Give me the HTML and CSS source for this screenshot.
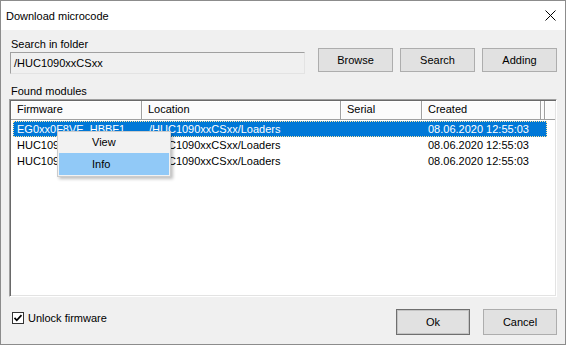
FILE: index.html
```html
<!DOCTYPE html>
<html lang="en">
<head>
    <meta charset="UTF-8">
    <title>Download microcode</title>
    <link rel="stylesheet" href="styles.css">
</head>
<body>
    <div class="window">
        <div class="titlebar">
            <span class="title">Download microcode</span>
            <svg class="close" width="11" height="11" viewBox="0 0 11 11">
                <path d="M0.5 0.5 L10.5 10.5 M10.5 0.5 L0.5 10.5" stroke="#000" stroke-width="1" fill="none"/>
            </svg>
        </div>

        <div class="content">
            <div class="folder-row">
                <div class="folder-field">
                    <div class="label">Search in folder</div>
                    <div class="path">/HUC1090xxCSxx</div>
                </div>
                <div class="actions">
                    <button class="btn">Browse</button>
                    <button class="btn">Search</button>
                    <button class="btn">Adding</button>
                </div>
            </div>

            <div class="label found">Found modules</div>

            <div class="listbox">
                <div class="header">
                    <div class="hcol c-fw">Firmware</div>
                    <div class="hcol c-loc">Location</div>
                    <div class="hcol c-serial">Serial</div>
                    <div class="hcol c-created">Created</div>
                    <div class="hcol c-tail"></div>
                    <div class="hcol c-rest"></div>
                </div>
                <div class="rows">
                    <div class="row selected">
                        <div class="cell c-fw">EG0xx0F8VE_HBBF1</div>
                        <div class="cell c-loc">/HUC1090xxCSxx/Loaders</div>
                        <div class="cell c-serial"></div>
                        <div class="cell c-created">08.06.2020 12:55:03</div>
                    </div>
                    <div class="row">
                        <div class="cell c-fw">HUC1090xxCSxx</div>
                        <div class="cell c-loc">/HUC1090xxCSxx/Loaders</div>
                        <div class="cell c-serial"></div>
                        <div class="cell c-created">08.06.2020 12:55:03</div>
                    </div>
                    <div class="row">
                        <div class="cell c-fw">HUC1090xxCSxx_2</div>
                        <div class="cell c-loc">/HUC1090xxCSxx/Loaders</div>
                        <div class="cell c-serial"></div>
                        <div class="cell c-created">08.06.2020 12:55:03</div>
                    </div>
                </div>
            </div>

            <div class="footer">
                <label class="check">
                    <svg class="box" width="12" height="12" viewBox="0 0 12 12">
                        <rect x="0.5" y="0.5" width="11" height="11" fill="#fff" stroke="#333"/>
                        <path d="M2.5 5.8 L4.8 8.3 L9.5 3.2" stroke="#000" stroke-width="1.7" fill="none"/>
                    </svg>
                    <span>Unlock firmware</span>
                </label>
                <div class="dialog-buttons">
                    <button class="btn default">Ok</button>
                    <button class="btn">Cancel</button>
                </div>
            </div>
        </div>

        <div class="menu">
            <div class="menu-item">View</div>
            <div class="menu-item hover">Info</div>
        </div>
    </div>
</body>
</html>
```

FILE: styles.css
```css
* {
    box-sizing: border-box;
}

body {
    margin: 0;
    background: #fff;
    font-family: "Liberation Sans", Arial, sans-serif;
    font-size: 11px;
    color: #000;
}

.window {
    position: relative;
    width: 566px;
    height: 345px;
    border: 1px solid #8c8c8c;
    background: #f0f0f0;
    display: flex;
    flex-direction: column;
}

.titlebar {
    height: 29px;
    background: #fff;
    display: flex;
    align-items: center;
    justify-content: space-between;
    padding: 0 9px 0 5px;
}

.close {
    display: block;
}

.content {
    flex: 1;
    display: flex;
    flex-direction: column;
    padding: 7px 8px 8px 8px;
}

.label {
    line-height: 14px;
    padding-left: 2px;
}

.folder-row {
    display: flex;
    align-items: flex-start;
}

.folder-field {
    width: 296px;
}

.path {
    margin: 1px 0 0 1px;
    height: 22px;
    line-height: 20px;
    padding-left: 3px;
    border: 1px solid;
    border-color: #a0a0a0 #e3e3e3 #e3e3e3 #a0a0a0;
    background: #f0f0f0;
}

.actions {
    margin-left: auto;
    margin-top: 11px;
    display: flex;
    gap: 7px;
}

.btn {
    width: 75px;
    height: 24px;
    padding: 0;
    background: #e1e1e1;
    border: 1px solid #adadad;
    font: inherit;
    color: #000;
}

.found {
    margin-top: 10px;
}

/* list view */
.listbox {
    margin-top: 1px;
    height: 198px;
    padding: 1px;
    background: #fff;
    border: 1px solid;
    border-color: #a0a0a0 #fff #fff #a0a0a0;
    box-shadow: inset 1px 1px 0 #696969, inset -1px -1px 0 #e3e3e3;
    overflow: hidden;
}

.header {
    display: flex;
    height: 19px;
}

.hcol {
    height: 19px;
    line-height: 17px;
    padding-left: 6px;
    background: #fbfbfb;
    border-right: 1px solid #a0a0a0;
    border-bottom: 1px solid #a0a0a0;
    box-shadow: inset 1px 1px 0 #fff;
    white-space: nowrap;
}

.hcol.c-fw { width: 131px; }
.hcol.c-loc { width: 199px; }
.hcol.c-serial { width: 81px; }
.hcol.c-created { width: 119px; }
.hcol.c-tail { width: 4px; padding: 0; }
.hcol.c-rest { flex: 1; border-right: none; }

.rows {
    margin-top: 1px;
}

.row {
    display: flex;
    width: 534px;
    margin-left: 2px;
    height: 16px;
    line-height: 16px;
    white-space: nowrap;
}

.cell {
    overflow: hidden;
    text-overflow: ellipsis;
}

.cell.c-fw { width: 129px; padding-left: 4px; }
.cell.c-loc { width: 199px; padding-left: 7px; }
.cell.c-serial { width: 81px; }
.cell.c-created { width: 125px; padding-left: 6px; }

.row.selected {
    background: #0078d7;
    color: #fff;
    outline: 1px dotted #ffe6a0;
    outline-offset: -1px;
}

.footer {
    margin-top: 12px;
    display: flex;
    align-items: flex-start;
}

.check {
    display: flex;
    align-items: center;
    gap: 4px;
    margin: 3px 0 0 3px;
    line-height: 12px;
}

.box {
    display: block;
}

.dialog-buttons {
    margin-left: auto;
    display: flex;
    gap: 13px;
}

.dialog-buttons .btn {
    width: 74px;
    height: 26px;
}

.btn.default {
    border-color: #6f6f6f;
    box-shadow: inset 0 0 0 1px #c4c4c4;
}

/* context menu */
.menu {
    position: absolute;
    left: 56px;
    top: 130px;
    width: 114px;
    padding: 0 1px 1px 1px;
    background: #f2f2f2;
    border: 1px solid #ccc;
    box-shadow: 2px 2px 3px rgba(0, 0, 0, 0.25);
}

.menu-item {
    height: 21px;
    line-height: 21px;
    padding-left: 33px;
}

.menu-item.hover {
    height: 22px;
    line-height: 22px;
    background: #91c9f7;
}
```
